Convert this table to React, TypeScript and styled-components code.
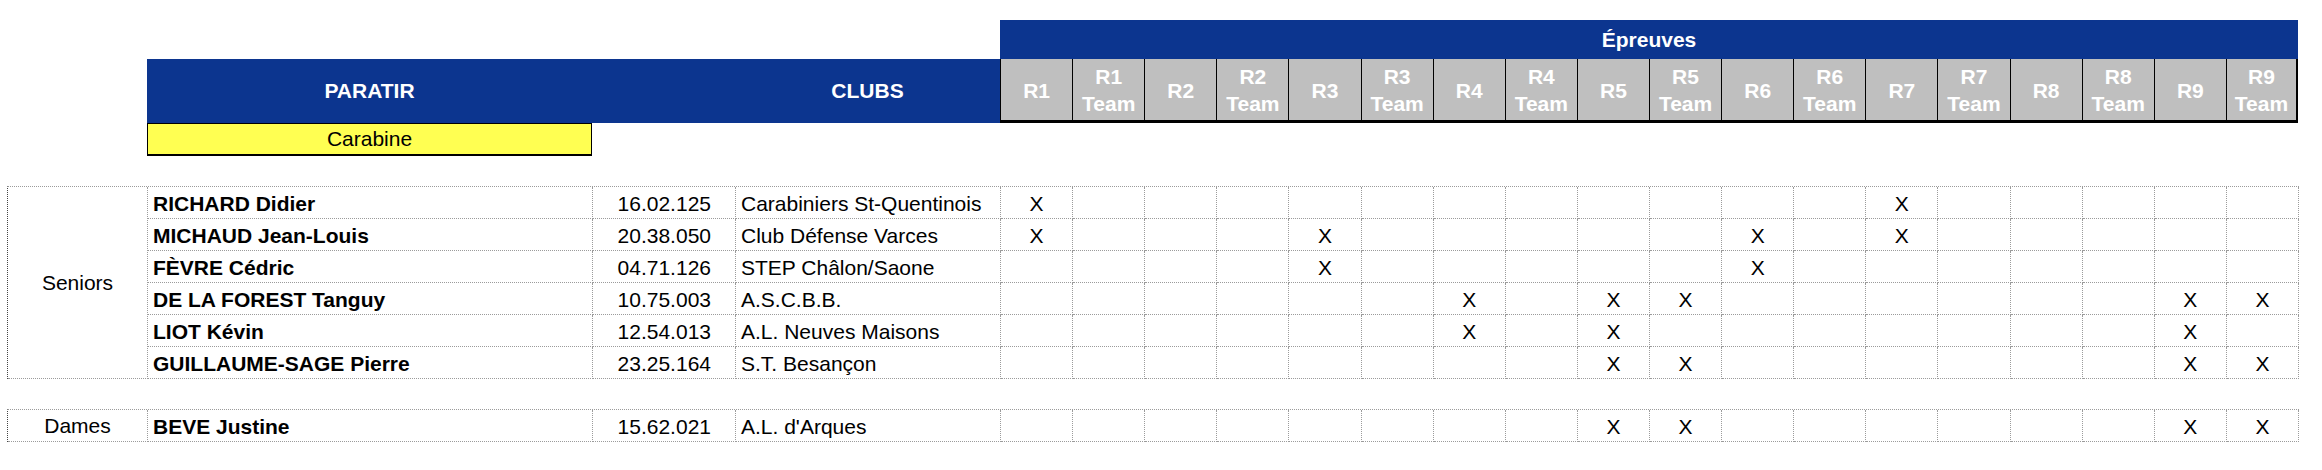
import React from "react";
import styled, { createGlobalStyle, css } from "styled-components";

const COLS = "140px 445px 143px 265px repeat(18, 72.111px)";
const BLUE = "#0c358f";
const GRAY = "#bfbfbf";
const DOT = "#9b9b9b";

const Global = createGlobalStyle`
  html, body { margin: 0; padding: 0; background: #fff; }
  body { font-family: "Liberation Sans", Arial, Helvetica, sans-serif; color: #000; }
`;

const Page = styled.div`
  padding: 20px 0 0 7px;
  width: 2298px;
`;

const HeaderGrid = styled.div`
  display: grid;
  grid-template-columns: ${COLS};
  grid-template-rows: 39px 64px 33px;
`;

const EventsBanner = styled.div`
  grid-column: 5 / span 18;
  grid-row: 1;
  background: ${BLUE};
  color: #fff;
  font-weight: 700;
  font-size: 21px;
  display: flex;
  align-items: center;
  justify-content: center;
`;

const BlueHead = styled.div<{ $col: number }>`
  grid-column: ${(p) => p.$col};
  grid-row: 2;
  background: ${BLUE};
  color: #fff;
  font-weight: 700;
  font-size: 21px;
  display: flex;
  align-items: center;
  justify-content: center;
`;

const RoundHead = styled.div<{ $col: number; $last?: boolean }>`
  grid-column: ${(p) => p.$col};
  grid-row: 2;
  box-sizing: border-box;
  background: ${GRAY};
  color: #fff;
  font-weight: 700;
  font-size: 21px;
  line-height: 27px;
  text-align: center;
  border-left: 1px solid #000;
  border-bottom: 3px solid #000;
  ${(p) =>
    p.$last &&
    css`
      border-right: 2px solid #000;
    `}
  display: flex;
  flex-direction: column;
  align-items: center;
  justify-content: center;
  padding-top: 1px;
`;

const Discipline = styled.div`
  grid-column: 2;
  grid-row: 3;
  box-sizing: border-box;
  background: #ffff52;
  border: 1px solid #000;
  border-bottom-width: 2px;
  font-size: 21px;
  display: flex;
  align-items: center;
  justify-content: center;
`;

const Table = styled.div<{ $gap: number }>`
  display: grid;
  grid-template-columns: ${COLS};
  grid-auto-rows: 32px;
  margin-top: ${(p) => p.$gap}px;
  border-top: 1px dotted ${DOT};
  border-left: 1px dotted #444;
  width: 2291px;
`;

const cellBase = css`
  box-sizing: border-box;
  border-right: 1px dotted ${DOT};
  border-bottom: 1px dotted ${DOT};
  font-size: 21px;
  line-height: 24px;
  padding-top: 5px;
  white-space: nowrap;
  overflow: hidden;
`;

const GroupCell = styled.div<{ $rows: number }>`
  ${cellBase};
  grid-column: 1;
  grid-row: span ${(p) => p.$rows};
  display: flex;
  align-items: center;
  justify-content: center;
  padding-top: 0;
`;

const NameCell = styled.div`
  ${cellBase};
  font-weight: 700;
  padding-left: 5px;
`;

const NumCell = styled.div`
  ${cellBase};
  text-align: right;
  padding-right: 24px;
`;

const ClubCell = styled.div`
  ${cellBase};
  padding-left: 5px;
`;

const MarkCell = styled.div`
  ${cellBase};
  text-align: center;
`;

const rounds = ["R1", "R2", "R3", "R4", "R5", "R6", "R7", "R8", "R9"];

type Shooter = {
  name: string;
  num: string;
  club: string;
  marks: number[];
};

const seniors: Shooter[] = [
  { name: "RICHARD Didier", num: "16.02.125", club: "Carabiniers St-Quentinois", marks: [0, 12] },
  { name: "MICHAUD Jean-Louis", num: "20.38.050", club: "Club Défense Varces", marks: [0, 4, 10, 12] },
  { name: "FÈVRE Cédric", num: "04.71.126", club: "STEP Châlon/Saone", marks: [4, 10] },
  { name: "DE LA FOREST Tanguy", num: "10.75.003", club: "A.S.C.B.B.", marks: [6, 8, 9, 16, 17] },
  { name: "LIOT Kévin", num: "12.54.013", club: "A.L. Neuves Maisons", marks: [6, 8, 16] },
  { name: "GUILLAUME-SAGE Pierre", num: "23.25.164", club: "S.T. Besançon", marks: [8, 9, 16, 17] },
];

const dames: Shooter[] = [
  { name: "BEVE Justine", num: "15.62.021", club: "A.L. d'Arques", marks: [8, 9, 16, 17] },
];

function ShooterRow({ s }: { s: Shooter }) {
  return (
    <>
      <NameCell>{s.name}</NameCell>
      <NumCell>{s.num}</NumCell>
      <ClubCell>{s.club}</ClubCell>
      {Array.from({ length: 18 }).map((_, i) => (
        <MarkCell key={i}>{s.marks.includes(i) ? "X" : ""}</MarkCell>
      ))}
    </>
  );
}

function Group({ label, list, gap }: { label: string; list: Shooter[]; gap: number }) {
  return (
    <Table $gap={gap}>
      <GroupCell $rows={list.length}>{label}</GroupCell>
      {list.map((s) => (
        <ShooterRow key={s.name} s={s} />
      ))}
    </Table>
  );
}

export default function App() {
  const heads: React.ReactNode[] = [];
  rounds.forEach((r, i) => {
    heads.push(
      <RoundHead key={r} $col={5 + i * 2}>
        <span>{r}</span>
      </RoundHead>
    );
    heads.push(
      <RoundHead key={r + "t"} $col={6 + i * 2} $last={i === rounds.length - 1}>
        <span>{r}</span>
        <span>Team</span>
      </RoundHead>
    );
  });
  return (
    <Page>
      <Global />
      <HeaderGrid>
        <EventsBanner>Épreuves</EventsBanner>
        <BlueHead $col={2}>PARATIR</BlueHead>
        <BlueHead $col={3} />
        <BlueHead $col={4}>CLUBS</BlueHead>
        {heads}
        <Discipline>Carabine</Discipline>
      </HeaderGrid>
      <Group label="Seniors" list={seniors} gap={30} />
      <Group label="Dames" list={dames} gap={30} />
    </Page>
  );
}
